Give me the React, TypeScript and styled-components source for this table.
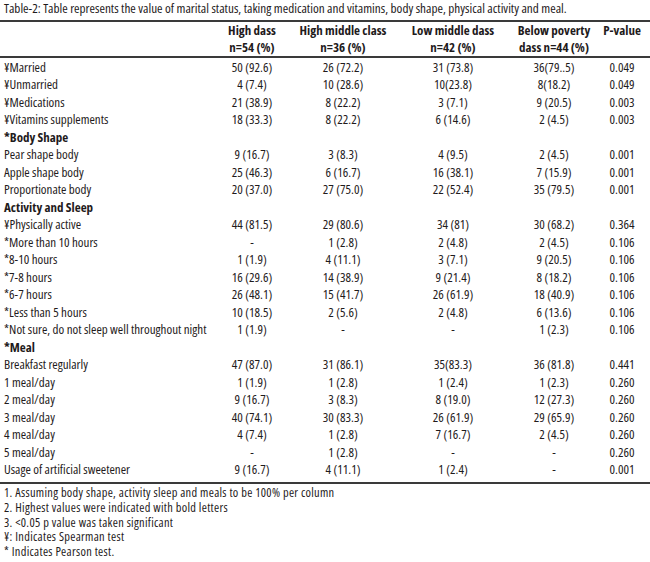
import React from 'react'
import styled, { createGlobalStyle } from 'styled-components';

const GlobalStyle = createGlobalStyle`
  html, body {
    margin: 0;
    padding: 0;
    background: #ffffff;
  }
  body {
    font-family: "Open Sans", "Liberation Sans", sans-serif;
    font-stretch: condensed;
    color: #1f1b1c;
  }
`;

type Row = {
  label: string;
  values?: string[];
  section?: boolean;
};

const rows: Row[] = [
  { label: '¥Married', values: ['50 (92.6)', '26 (72.2)', '31 (73.8)', '36(79..5)', '0.049'] },
  { label: '¥Unmarried', values: ['4 (7.4)', '10 (28.6)', '10(23.8)', '8(18.2)', '0.049'] },
  { label: '¥Medications', values: ['21 (38.9)', '8 (22.2)', '3 (7.1)', '9 (20.5)', '0.003'] },
  { label: '¥Vitamins supplements', values: ['18 (33.3)', '8 (22.2)', '6 (14.6)', '2 (4.5)', '0.003'] },
  { label: '*Body Shape', section: true },
  { label: 'Pear shape body', values: ['9 (16.7)', '3 (8.3)', '4 (9.5)', '2 (4.5)', '0.001'] },
  { label: 'Apple shape body', values: ['25 (46.3)', '6 (16.7)', '16 (38.1)', '7 (15.9)', '0.001'] },
  { label: 'Proportionate body', values: ['20 (37.0)', '27 (75.0)', '22 (52.4)', '35 (79.5)', '0.001'] },
  { label: 'Activity and Sleep', section: true },
  { label: '¥Physically active', values: ['44 (81.5)', '29 (80.6)', '34 (81)', '30 (68.2)', '0.364'] },
  { label: '*More than 10 hours', values: ['-', '1 (2.8)', '2 (4.8)', '2 (4.5)', '0.106'] },
  { label: '*8-10 hours', values: ['1 (1.9)', '4 (11.1)', '3 (7.1)', '9 (20.5)', '0.106'] },
  { label: '*7-8 hours', values: ['16 (29.6)', '14 (38.9)', '9 (21.4)', '8 (18.2)', '0.106'] },
  { label: '*6-7 hours', values: ['26 (48.1)', '15 (41.7)', '26 (61.9)', '18 (40.9)', '0.106'] },
  { label: '*Less than 5 hours', values: ['10 (18.5)', '2 (5.6)', '2 (4.8)', '6 (13.6)', '0.106'] },
  { label: '*Not sure, do not sleep well throughout night', values: ['1 (1.9)', '-', '-', '1 (2.3)', '0.106'] },
  { label: '*Meal', section: true },
  { label: 'Breakfast regularly', values: ['47 (87.0)', '31 (86.1)', '35(83.3)', '36 (81.8)', '0.441'] },
  { label: '1 meal/day', values: ['1 (1.9)', '1 (2.8)', '1 (2.4)', '1 (2.3)', '0.260'] },
  { label: '2 meal/day', values: ['9 (16.7)', '3 (8.3)', '8 (19.0)', '12 (27.3)', '0.260'] },
  { label: '3 meal/day', values: ['40 (74.1)', '30 (83.3)', '26 (61.9)', '29 (65.9)', '0.260'] },
  { label: '4 meal/day', values: ['4 (7.4)', '1 (2.8)', '7 (16.7)', '2 (4.5)', '0.260'] },
  { label: '5 meal/day', values: ['-', '1 (2.8)', '-', '-', '0.260'] },
  { label: 'Usage of artificial sweetener', values: ['9 (16.7)', '4 (11.1)', '1 (2.4)', '-', '0.001'] },
];

const headers: string[][] = [
  ['High dass', 'n=54 (%)'],
  ['High middle class', 'n=36 (%)'],
  ['Low middle dass', 'n=42 (%)'],
  ['Below poverty', 'dass n=44 (%)'],
  ['P-value'],
];

const notes = [
  '1. Assuming body shape, activity sleep and meals to be 100% per column',
  '2. Highest values were indicated with bold letters',
  '3. <0.05 p value was taken significant',
  '¥: Indicates Spearman test',
  '* Indicates Pearson test.',
];

function App() {
  return (
    <Page>
      <GlobalStyle />
      <Caption>
        Table-2: Table represents the value of marital status, taking medication and vitamins, body shape, physical activity and meal.
      </Caption>
      <Table>
        <HeadRow>
          <Cell />
          {headers.map((h, i) => (
            <HeadCell key={i}>
              {h.map((line, j) => (
                <HeadLine key={j}>{line}</HeadLine>
              ))}
            </HeadCell>
          ))}
        </HeadRow>
        <Body>
          {rows.map((r, i) => (
            <BodyRow key={i}>
              <Label $bold={r.section}>{r.label}</Label>
              {(r.values || ['', '', '', '', '']).map((v, j) => (
                <Value key={j}>{v}</Value>
              ))}
            </BodyRow>
          ))}
        </Body>
      </Table>
      <Notes>
        {notes.map((n, i) => (
          <Note key={i}>{n}</Note>
        ))}
      </Notes>
    </Page>
  )
}

export default App

const columns = '210px 84px 98px 122px 80px 56px';

const Page = styled.div`
  width: 650px;
  height: 562px;
  overflow: hidden;
  background: #fff;
`;

const Caption = styled.div`
  font-size: 13.2px;
  line-height: 16px;
  padding: 0 0 4px 4px;
  white-space: nowrap;
`;

const Table = styled.div`
  border-top: 2px solid #3a3a3a;
  border-bottom: 2px solid #3a3a3a;
`;

const HeadRow = styled.div`
  display: grid;
  grid-template-columns: ${columns};
  border-bottom: 2px solid #3a3a3a;
`;

const Cell = styled.div``;

const HeadCell = styled.div`
  text-align: center;
  font-weight: bold;
  font-size: 13px;
`;

const HeadLine = styled.div`
  line-height: 17px;
  white-space: nowrap;
`;

const Body = styled.div`
  padding: 0.5px 0 3.5px;
`;

const BodyRow = styled.div`
  display: grid;
  grid-template-columns: ${columns};
  height: 17.5px;
  line-height: 17.5px;
  font-size: 13px;
`;

const Label = styled.div<{ $bold?: boolean }>`
  padding-left: 4px;
  white-space: nowrap;
  font-weight: ${p => (p.$bold ? 'bold' : 'normal')};
`;

const Value = styled.div`
  text-align: center;
  white-space: nowrap;
`;

const Notes = styled.div`
  padding: 2px 0 0 4px;
`;

const Note = styled.div`
  font-size: 12.4px;
  letter-spacing: 0.3px;
  line-height: 14.8px;
  white-space: nowrap;
`;
